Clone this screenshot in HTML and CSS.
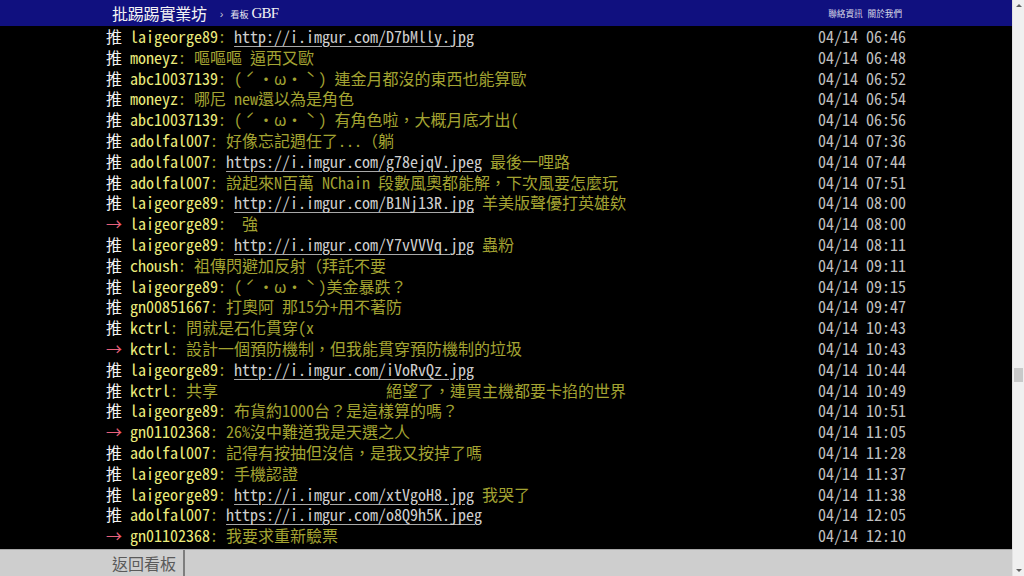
FILE: index.html
```html
<!DOCTYPE html>
<html lang="zh-Hant">
<head>
<meta charset="utf-8">
<title>批踢踢實業坊 › 看板 GBF</title>
<link rel="stylesheet" href="styles.css">
</head>
<body>
<div class="window">
  <div class="page">
    <header class="topbar">
      <div class="topbar-inner">
        <div class="crumbs">
          <span class="site">批踢踢實業坊</span>
          <span class="sep">›</span>
          <span class="board-label">看板</span>
          <span class="board-name">GBF</span>
        </div>
        <nav class="toplinks">
          <span>聯絡資訊</span>
          <span>關於我們</span>
        </nav>
      </div>
    </header>

    <main class="content">
      <div class="pushes">
        <div class="push"><span class="p-left"><span class="tag">推 </span><span class="uid">laigeorge89</span><span class="msg">: <span class="link">http://i.imgur.com/D7bMlly.jpg</span></span></span><span class="time">04/14 06:46</span></div>
        <div class="push"><span class="p-left"><span class="tag">推 </span><span class="uid">moneyz</span><span class="msg">: 嘔嘔嘔 逼西又歐</span></span><span class="time">04/14 06:48</span></div>
        <div class="push"><span class="p-left"><span class="tag">推 </span><span class="uid">abc10037139</span><span class="msg">: (<span class="fw">ˊ</span>・ω・<span class="fw">ˋ</span>) 連金月都沒的東西也能算歐</span></span><span class="time">04/14 06:52</span></div>
        <div class="push"><span class="p-left"><span class="tag">推 </span><span class="uid">moneyz</span><span class="msg">: 哪尼 new還以為是角色</span></span><span class="time">04/14 06:54</span></div>
        <div class="push"><span class="p-left"><span class="tag">推 </span><span class="uid">abc10037139</span><span class="msg">: (<span class="fw">ˊ</span>・ω・<span class="fw">ˋ</span>) 有角色啦，大概月底才出(</span></span><span class="time">04/14 06:56</span></div>
        <div class="push"><span class="p-left"><span class="tag">推 </span><span class="uid">adolfal007</span><span class="msg">: 好像忘記週任了...（躺</span></span><span class="time">04/14 07:36</span></div>
        <div class="push"><span class="p-left"><span class="tag">推 </span><span class="uid">adolfal007</span><span class="msg">: <span class="link">https://i.imgur.com/g78ejqV.jpeg</span> 最後一哩路</span></span><span class="time">04/14 07:44</span></div>
        <div class="push"><span class="p-left"><span class="tag">推 </span><span class="uid">adolfal007</span><span class="msg">: 說起來N百萬 NChain 段數風奧都能解，下次風要怎麼玩</span></span><span class="time">04/14 07:51</span></div>
        <div class="push"><span class="p-left"><span class="tag">推 </span><span class="uid">laigeorge89</span><span class="msg">: <span class="link">http://i.imgur.com/B1Nj13R.jpg</span> 羊美版聲優打英雄欸</span></span><span class="time">04/14 08:00</span></div>
        <div class="push"><span class="p-left"><span class="tag arrow">→ </span><span class="uid">laigeorge89</span><span class="msg">:  強</span></span><span class="time">04/14 08:00</span></div>
        <div class="push"><span class="p-left"><span class="tag">推 </span><span class="uid">laigeorge89</span><span class="msg">: <span class="link">http://i.imgur.com/Y7vVVVq.jpg</span> 蟲粉</span></span><span class="time">04/14 08:11</span></div>
        <div class="push"><span class="p-left"><span class="tag">推 </span><span class="uid">choush</span><span class="msg">: 祖傳閃避加反射（拜託不要</span></span><span class="time">04/14 09:11</span></div>
        <div class="push"><span class="p-left"><span class="tag">推 </span><span class="uid">laigeorge89</span><span class="msg">: (<span class="fw">ˊ</span>・ω・<span class="fw">ˋ</span>)美金暴跌？</span></span><span class="time">04/14 09:15</span></div>
        <div class="push"><span class="p-left"><span class="tag">推 </span><span class="uid">gn00851667</span><span class="msg">: 打奧阿 那15分+用不著防</span></span><span class="time">04/14 09:47</span></div>
        <div class="push"><span class="p-left"><span class="tag">推 </span><span class="uid">kctrl</span><span class="msg">: 問就是石化貫穿(x</span></span><span class="time">04/14 10:43</span></div>
        <div class="push"><span class="p-left"><span class="tag arrow">→ </span><span class="uid">kctrl</span><span class="msg">: 設計一個預防機制，但我能貫穿預防機制的垃圾</span></span><span class="time">04/14 10:43</span></div>
        <div class="push"><span class="p-left"><span class="tag">推 </span><span class="uid">laigeorge89</span><span class="msg">: <span class="link">http://i.imgur.com/iVoRvQz.jpg</span></span></span><span class="time">04/14 10:44</span></div>
        <div class="push"><span class="p-left"><span class="tag">推 </span><span class="uid">kctrl</span><span class="msg">: 共享                     絕望了，連買主機都要卡掐的世界</span></span><span class="time">04/14 10:49</span></div>
        <div class="push"><span class="p-left"><span class="tag">推 </span><span class="uid">laigeorge89</span><span class="msg">: 布貨約1000台？是這樣算的嗎？</span></span><span class="time">04/14 10:51</span></div>
        <div class="push"><span class="p-left"><span class="tag arrow">→ </span><span class="uid">gn01102368</span><span class="msg">: 26%沒中難道我是天選之人</span></span><span class="time">04/14 11:05</span></div>
        <div class="push"><span class="p-left"><span class="tag">推 </span><span class="uid">adolfal007</span><span class="msg">: 記得有按抽但沒信，是我又按掉了嗎</span></span><span class="time">04/14 11:28</span></div>
        <div class="push"><span class="p-left"><span class="tag">推 </span><span class="uid">laigeorge89</span><span class="msg">: 手機認證</span></span><span class="time">04/14 11:37</span></div>
        <div class="push"><span class="p-left"><span class="tag">推 </span><span class="uid">laigeorge89</span><span class="msg">: <span class="link">http://i.imgur.com/xtVgoH8.jpg</span> 我哭了</span></span><span class="time">04/14 11:38</span></div>
        <div class="push"><span class="p-left"><span class="tag">推 </span><span class="uid">adolfal007</span><span class="msg">: <span class="link">https://i.imgur.com/o8Q9h5K.jpeg</span></span></span><span class="time">04/14 12:05</span></div>
        <div class="push"><span class="p-left"><span class="tag arrow">→ </span><span class="uid">gn01102368</span><span class="msg">: 我要求重新驗票</span></span><span class="time">04/14 12:10</span></div>
      </div>
    </main>

    <footer class="bottombar">
      <div class="bottombar-inner">
        <span class="back">返回看板</span>
        <span class="divider"></span>
      </div>
    </footer>
  </div>

  <aside class="scrollbar">
    <div class="sb-arrow sb-up"></div>
    <div class="sb-track"><div class="sb-thumb"></div></div>
    <div class="sb-arrow sb-down"></div>
  </aside>
</div>
</body>
</html>
```

FILE: styles.css
```css
html, body {
  margin: 0;
  padding: 0;
  height: 100%;
  overflow: hidden;
  background: #000;
}

.window {
  display: flex;
  width: 1024px;
  height: 576px;
}

.page {
  flex: 1;
  display: flex;
  flex-direction: column;
  min-width: 0;
  background: #000;
}

/* top bar */
.topbar {
  height: 26px;
  background: #10107f;
  flex: none;
}

.topbar-inner {
  width: 800px;
  margin: 0 auto;
  height: 100%;
  display: flex;
  align-items: center;
  justify-content: space-between;
}

.crumbs {
  display: flex;
  align-items: center;
  padding-left: 6px;
  color: #fff;
}

.site {
  font-family: "Noto Sans CJK TC", sans-serif;
  font-size: 16px;
  line-height: 20px;
  color: #f4f4f4;
  letter-spacing: -0.2px;
}

.sep {
  font-family: "Liberation Sans", sans-serif;
  font-size: 11px;
  color: #c8c8d8;
  margin: 2px 7px 0 13px;
}

.board-label {
  font-family: "Noto Sans CJK TC", sans-serif;
  font-size: 9px;
  color: #e8e8f0;
  margin-top: 2px;
  margin-right: 3px;
}

.board-name {
  font-family: "Liberation Serif", serif;
  font-size: 15px;
  letter-spacing: -0.8px;
  color: #f4f4f4;
}

.toplinks {
  display: flex;
  gap: 5px;
  padding-right: 4px;
  font-family: "Noto Sans CJK TC", sans-serif;
  font-size: 8.6px;
  color: #d8d8e8;
}

/* pushes */
.content {
  flex: 1;
  min-height: 0;
}

.pushes {
  width: 800px;
  margin: 0 auto;
  font-family: "Noto Sans Mono CJK TC", "Liberation Mono", "Noto Sans CJK TC", monospace;
  font-size: 16px;
  line-height: 20.8px;
}

.push {
  display: flex;
  justify-content: space-between;
  white-space: pre;
  height: 20.8px;
}

.fw {
  display: inline-block;
  width: 16px;
  text-align: center;
}

.tag {
  color: #f2f2f2;
}

.tag.arrow {
  color: #e8607a;
}

.uid {
  color: #ecec7c;
}

.msg {
  color: #a3a332;
}

.link {
  color: #cfcfcf;
  text-decoration: underline;
  text-decoration-color: #a8a8a8;
  text-underline-offset: 3px;
}

.time {
  color: #c0c0c0;
}

/* bottom bar */
.bottombar {
  height: 26px;
  flex: none;
  background: #cecece;
  border-top: 1px solid #a8a8a8;
}

.bottombar-inner {
  width: 800px;
  margin: 0 auto;
  height: 100%;
  display: flex;
  align-items: stretch;
}

.back {
  display: flex;
  align-items: center;
  padding: 0 7px 0 6px;
  font-family: "Noto Sans CJK TC", sans-serif;
  font-size: 16px;
  color: #5a5a5a;
}

.divider {
  width: 2px;
  background: #7e7e7e;
}

/* scrollbar */
.scrollbar {
  width: 11px;
  flex: none;
  display: flex;
  flex-direction: column;
  background: #f0f0f0;
  border-left: 1px solid #e2e2e2;
}

.sb-arrow {
  height: 12px;
  flex: none;
  position: relative;
}

.sb-up::after,
.sb-down::after {
  content: "";
  position: absolute;
  left: 3px;
  border-left: 3px solid transparent;
  border-right: 3px solid transparent;
}

.sb-up::after {
  top: 4px;
  border-bottom: 3px solid #606060;
}

.sb-down::after {
  bottom: 4px;
  border-top: 3px solid #606060;
}

.sb-track {
  flex: 1;
  position: relative;
}

.sb-thumb {
  position: absolute;
  left: 1px;
  right: 1px;
  top: 356px;
  height: 14px;
  background: #c9c9c9;
}
```
